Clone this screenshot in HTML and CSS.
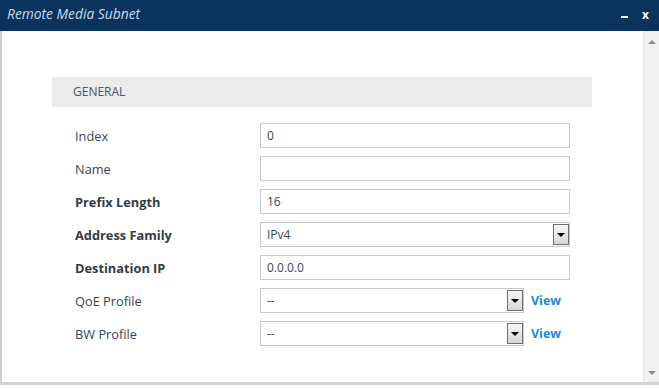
FILE: index.html
```html
<!DOCTYPE html>
<html>
<head>
<meta charset="utf-8">
<link rel="stylesheet" href="styles.css">
</head>
<body>
<div class="window">
  <div class="titlebar">
    <span class="title">Remote Media Subnet</span>
    <span class="controls"><span class="min"></span><span class="close">x</span></span>
  </div>
  <div class="body">
    <div class="content">
      <div class="section">GENERAL</div>
      <div class="rows">
        <div class="row"><label class="lbl">Index</label><div class="field"><div class="input">0</div></div></div>
        <div class="row"><label class="lbl">Name</label><div class="field"><div class="input"></div></div></div>
        <div class="row"><label class="lbl bold">Prefix Length</label><div class="field"><div class="input">16</div></div></div>
        <div class="row"><label class="lbl bold">Address Family</label><div class="field"><div class="input select">IPv4<span class="btn"><span class="tri"></span></span></div></div></div>
        <div class="row"><label class="lbl bold">Destination IP</label><div class="field"><div class="input">0.0.0.0</div></div></div>
        <div class="row"><label class="lbl">QoE Profile</label><div class="field"><div class="input select short">--<span class="btn"><span class="tri"></span></span></div><a class="view">View</a></div></div>
        <div class="row"><label class="lbl">BW Profile</label><div class="field"><div class="input select short">--<span class="btn"><span class="tri"></span></span></div><a class="view">View</a></div></div>
      </div>
    </div>
    <div class="scrollbar">
      <span class="arrow up"></span>
      <span class="arrow down"></span>
    </div>
  </div>
  <div class="bottom"></div>
</div>
</body>
</html>
```

FILE: styles.css
```css
html, body {
  margin: 0;
  padding: 0;
  background: #ffffff;
}
body {
  font-family: "Open Sans", "DejaVu Sans", sans-serif;
  width: 659px;
  height: 388px;
  overflow: hidden;
}
.window {
  width: 659px;
  height: 388px;
  display: flex;
  flex-direction: column;
}
.titlebar {
  height: 31px;
  background: #0b335e;
  display: flex;
  align-items: center;
  justify-content: space-between;
  flex-shrink: 0;
}
.title {
  font-style: italic;
  color: #c6dbf0;
  font-size: 13.8px;
  padding-left: 7px;
  margin-top: -4px;
}
.controls {
  display: flex;
  align-items: center;
  padding-right: 10px;
  gap: 14px;
  margin-top: -2px;
}
.min {
  width: 7px;
  height: 2px;
  background: #ffffff;
  margin-top: 5px;
}
.close {
  color: #ffffff;
  font-weight: bold;
  font-size: 12px;
  line-height: 12px;
}
.body {
  flex: 1;
  display: flex;
  border-left: 2px solid #cfd0d6;
  min-height: 0;
}
.content {
  flex: 1;
  padding: 46px 0 0 50px;
}
.section {
  width: 519px;
  height: 30px;
  background: #ececec;
  font-size: 12px;
  color: #4a5563;
  padding-left: 21px;
  line-height: 30px;
}
.rows {
  padding-top: 16px;
  display: flex;
  flex-direction: column;
  gap: 8px;
}
.row {
  display: flex;
  align-items: center;
  height: 25px;
}
.lbl {
  width: 185px;
  padding-left: 23px;
  font-size: 12.8px;
  color: #3a4350;
}
.lbl.bold {
  font-weight: bold;
  color: #333b48;
}
.field {
  display: flex;
  align-items: center;
}
.input {
  box-sizing: border-box;
  width: 310px;
  height: 25px;
  border: 1px solid #c8c8d2;
  background: #fff;
  font-size: 12px;
  color: #3a4350;
  padding-left: 6px;
  line-height: 23px;
  position: relative;
}
.input.short {
  width: 264px;
}
.btn {
  position: absolute;
  right: 0;
  top: 1px;
  width: 14px;
  height: 19px;
  border: 1px solid #6e6e6e;
  background: linear-gradient(#f7f7f7, #d6d6d6);
  display: flex;
  align-items: center;
  justify-content: center;
}
.tri {
  width: 0;
  height: 0;
  border-left: 4px solid transparent;
  border-right: 4px solid transparent;
  border-top: 4px solid #000;
  margin-top: 1px;
}
.view {
  margin-left: 7px;
  font-size: 12.5px;
  font-weight: bold;
  color: #1c8ad6;
}
.scrollbar {
  width: 15px;
  background: #f0f0f0;
  border-left: 1px solid #e6e6e6;
  display: flex;
  flex-direction: column;
  justify-content: space-between;
  align-items: center;
  padding: 9px 0 7px;
}
.arrow {
  width: 0;
  height: 0;
  border-left: 4px solid transparent;
  border-right: 4px solid transparent;
}
.arrow.up {
  border-bottom: 4px solid #8a8a8a;
}
.arrow.down {
  border-top: 4px solid #8a8a8a;
}
.bottom {
  height: 3px;
  background: #d2d3da;
  margin-bottom: 3px;
  flex-shrink: 0;
}
```
